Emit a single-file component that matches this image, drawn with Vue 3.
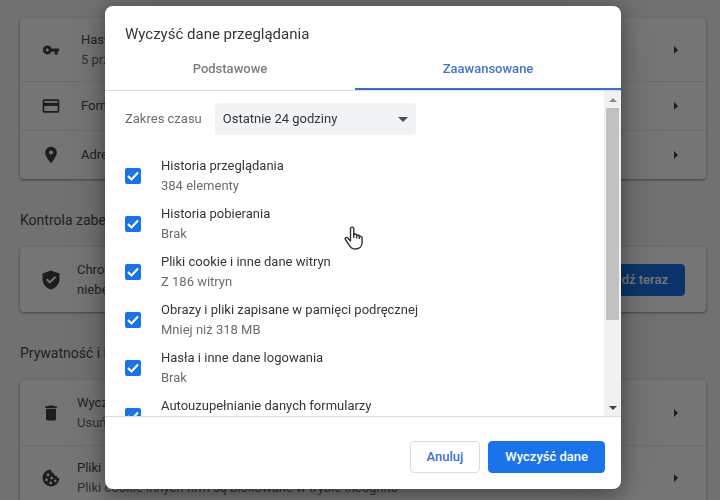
<script setup>
import { ref } from 'vue'

const range = ref('day')
const items = ref([
  { id: 'history', title: 'Historia przeglądania', note: '384 elementy', on: true },
  { id: 'downloads', title: 'Historia pobierania', note: 'Brak', on: true },
  { id: 'cookies', title: 'Pliki cookie i inne dane witryn', note: 'Z 186 witryn', on: true },
  { id: 'cache', title: 'Obrazy i pliki zapisane w pamięci podręcznej', note: 'Mniej niż 318 MB', on: true },
  { id: 'passwords', title: 'Hasła i inne dane logowania', note: 'Brak', on: true },
  { id: 'forms', title: 'Autouzupełnianie danych formularzy', note: '', on: true }
])
</script>

<template>
  <div class="screen">
    <main class="page">
      <section class="card">
        <a href="#" class="row tall">
          <svg class="icon" viewBox="0 0 20 20"><path transform="translate(1.2 1.2) scale(.733)" d="M12.65 10C11.83 7.67 9.61 6 7 6c-3.31 0-6 2.69-6 6s2.69 6 6 6c2.61 0 4.83-1.67 5.65-4H17v4h4v-4h2v-4H12.65zM7 14c-1.1 0-2-.9-2-2s.9-2 2-2 2 .9 2 2-.9 2-2 2z" /></svg>
          <span class="label wide">Hasła<small>5 przejętych</small></span>
          <svg class="chevron" viewBox="0 0 6 8"><path d="M1 0l4 4-4 4z" /></svg>
        </a>
        <a href="#" class="row">
          <svg class="icon" viewBox="0 0 24 24"><path d="M20 4H4c-1.110 0-2 .89-2 2v12c0 1.110.89 2 2 2h16c1.110 0 2-.89 2-2V6c0-1.110-.89-2-2-2zm0 14H4v-6h16v6zm0-10H4V6h16v2z" /></svg>
          <span class="label wide">Formy płatności</span>
          <svg class="chevron" viewBox="0 0 6 8"><path d="M1 0l4 4-4 4z" /></svg>
        </a>
        <a href="#" class="row">
          <svg class="icon" viewBox="0 0 24 24"><path d="M12 2C8.130 2 5 5.130 5 9c0 5.250 7 13 7 13s7-7.750 7-13c0-3.870-3.130-7-7-7zm0 9.500a2.500 2.500 0 1 1 0-5 2.500 2.500 0 0 1 0 5z" /></svg>
          <span class="label wide">Adresy</span>
          <svg class="chevron" viewBox="0 0 6 8"><path d="M1 0l4 4-4 4z" /></svg>
        </a>
      </section>

      <h2>Kontrola zabezpieczeń</h2>
      <section class="card">
        <div class="row double">
          <svg class="icon" viewBox="0 0 20 20"><path fill-rule="evenodd" d="M10 .5L1.500 3.500v5.500c0 5 3.400 9 8.500 10.500 5.100-1.500 8.500-5.500 8.500-10.500V3.500zM8.800 13.800L5 10l1.400-1.400 2.400 2.400 5-5L15.200 7.400z" /></svg>
          <span class="label">Chrome<span>niebezpieczne</span></span>
          <button type="button" class="primary check-now">Sprawdź teraz</button>
        </div>
      </section>

      <h2>Prywatność i bezpieczeństwo</h2>
      <section class="card">
        <a href="#" class="row double">
          <svg class="icon" viewBox="0 0 24 24"><path d="M6 19c0 1.100.9 2 2 2h8c1.100 0 2-.9 2-2V7H6v12zM19 4h-3.500l-1-1h-5l-1 1H5v2h14V4z" /></svg>
          <span class="label">Wyczyść<small>Usuń</small></span>
          <svg class="chevron" viewBox="0 0 6 8"><path d="M1 0l4 4-4 4z" /></svg>
        </a>
        <a href="#" class="row double">
          <svg class="icon" viewBox="0 0 20 20"><path fill-rule="evenodd" d="M10 1.500a8.500 8.500 0 1 0 8.500 8.500c-1.600.4-2.600-.5-2.700-2-1.900.1-3-1-2.700-2.700-1.900-.1-3-1.700-3.100-3.800zM7 5.300a1.500 1.500 0 1 1 0 3 1.500 1.500 0 0 1 0-3zM5.500 10.500a1.400 1.400 0 1 1 0 2.800 1.400 1.400 0 0 1 0-2.800zM10.700 8.700a1.400 1.400 0 1 1 0 2.800 1.400 1.400 0 0 1 0-2.800zM9.700 13.500a1.400 1.400 0 1 1 0 2.800 1.400 1.400 0 0 1 0-2.800zM14.200 11.500a1.300 1.300 0 1 1 0 2.600 1.300 1.300 0 0 1 0-2.600z" /></svg>
          <span class="label">Pliki<small>Pliki cookie innych firm są blokowane w trybie incognito</small></span>
          <svg class="chevron" viewBox="0 0 6 8"><path d="M1 0l4 4-4 4z" /></svg>
        </a>
      </section>
    </main>

    <div class="backdrop">
      <div class="dialog" role="dialog" aria-labelledby="dialog-title">
        <h1 id="dialog-title">Wyczyść dane przeglądania</h1>
        <div class="tabs" role="tablist">
          <button type="button" role="tab" aria-selected="false">Podstawowe</button>
          <button type="button" role="tab" aria-selected="true" class="active">Zaawansowane</button>
        </div>
        <div class="body">
          <div class="content">
            <div class="range">
              <label for="range">Zakres czasu</label>
              <span class="select">
                <select id="range" v-model="range">
                  <option value="day">Ostatnie 24 godziny</option>
                </select>
                <svg viewBox="0 0 10 5"><path d="M0 0h10L5 5z" /></svg>
              </span>
            </div>
            <label v-for="item in items" :key="item.id" class="item">
              <input v-model="item.on" type="checkbox">
              <svg class="tick" viewBox="0 0 16 16"><path d="M3 8l3.500 3.500L13 4.500" /></svg>
              <span class="text">{{ item.title }}<small>{{ item.note }}</small></span>
            </label>
          </div>
          <div class="scrollbar">
            <svg class="up" viewBox="0 0 8 4"><path d="M4 0l4 4H0z" /></svg>
            <div class="track"><div class="thumb"></div></div>
            <svg class="down" viewBox="0 0 8 4"><path d="M0 0h8L4 4z" /></svg>
          </div>
        </div>
        <div class="footer">
          <button type="button" class="secondary">Anuluj</button>
          <button type="button" class="primary">Wyczyść dane</button>
        </div>
      </div>
    </div>

    <svg class="pointer" viewBox="0 0 20 24"><path d="M6.500 15V2.800c0-2.300 3.300-2.300 3.300 0V9c.2-1.400 2.900-1.300 2.900.3v.4c.3-1.200 2.700-1 2.700.5v.6c.5-.9 2.700-.6 2.700.8v5c0 3.800-2.800 6.400-6.600 6.400-3.500 0-5-1.600-6.600-4.200l-3.400-5.300c-1-1.600.9-2.900 2.200-1.500z" /><path d="M9.800 7v5M12.700 9v3.500M15.400 10v3" /></svg>
  </div>
</template>

<style>
body {
  margin: 0;
  overflow: hidden;
}
</style>

<style scoped>
* {
  box-sizing: border-box;
}

.screen {
  position: relative;
  height: 100vh;
  overflow: hidden;
  background: #f4f7f5;
  color: #34373a;
  font: 13px/20px Roboto, "Liberation Sans", sans-serif;
}

button,
select {
  font: inherit;
}

small {
  display: block;
  color: #6a6d71;
  font-size: 13px;
}

.page {
  padding: 18px 14px 0 20px;
  color: #46494c;
}

.card {
  border-radius: 4px;
  background: #fff;
  box-shadow: 0 1px 2px rgba(60, 64, 67, .4), 0 1px 3px 1px rgba(60, 64, 67, .15);
}

.row {
  display: flex;
  align-items: center;
  height: 49px;
  padding: 0 27px 0 21px;
  color: inherit;
  text-decoration: none;
}

.row + .row {
  border-top: 1px solid #ececec;
}

.row.tall {
  height: 63px;
}

.row.double {
  height: 65px;
}

.icon {
  width: 20px;
  height: 20px;
  fill: #3c4043;
}

.label {
  flex: 1;
  padding-left: 16px;
}

.label.wide {
  padding-left: 20px;
}

.label span {
  display: block;
}

.chevron {
  width: 6px;
  height: 8px;
  fill: #3c4043;
}

h2 {
  margin: 31px 0 17px;
  font-size: 14px;
  font-weight: 400;
  line-height: 20px;
}

.primary,
.secondary {
  height: 32px;
  padding: 0 16px;
  border: 1px solid #1a73e8;
  border-radius: 4px;
  background: #1a73e8;
  color: #fff;
  font-weight: 500;
}

.secondary {
  border-color: #dadce0;
  background: #fff;
  color: #3b6fd0;
}

.check-now {
  margin-right: -6px;
}

.backdrop {
  position: fixed;
  inset: 0;
  display: flex;
  justify-content: center;
  padding: 6px 0 11px 6px;
  background: rgba(0, 0, 0, .54);
}

.dialog {
  display: flex;
  flex-direction: column;
  width: 516px;
  max-width: 100%;
  overflow: hidden;
  border-radius: 8px;
  background: #fff;
  box-shadow: 0 4px 20px rgba(0, 0, 0, .4), 0 0 60px rgba(0, 0, 0, .15);
}

h1 {
  margin: 0;
  padding: 17px 20px 4px;
  font-size: 15px;
  font-weight: 400;
  line-height: 22px;
}

.tabs {
  display: flex;
  border-bottom: 1px solid #dadce0;
}

.tabs button {
  flex: auto;
  height: 41px;
  padding: 1px 0 0;
  border: 0;
  border-bottom: 2px solid transparent;
  background: none;
  color: #7a7d80;
  font-weight: 500;
}

.tabs .active {
  border-color: #3b6fc4;
  color: #4474ca;
}

.body {
  display: flex;
  flex: 1;
  min-height: 0;
  overflow: hidden;
}

.content {
  flex: 1;
  padding: 12px 20px 0;
}

.range {
  display: flex;
  align-items: center;
  gap: 13px;
  margin-bottom: 17px;
  color: #6a6d71;
}

.select {
  display: grid;
  align-items: center;
  width: 201px;
}

.select select,
.select svg {
  grid-area: 1 / 1;
}

.select select {
  height: 32px;
  padding: 0 8px;
  border: 0;
  border-radius: 4px;
  background: #f1f3f4;
  color: #34373a;
  appearance: none;
}

.select svg {
  justify-self: end;
  width: 10px;
  height: 5px;
  margin-right: 8px;
  fill: #4d5155;
  pointer-events: none;
}

.item {
  display: grid;
  grid-template-columns: 16px 1fr;
  align-items: center;
  column-gap: 20px;
  height: 48px;
}

.item input,
.tick {
  grid-area: 1 / 1;
  width: 16px;
  height: 16px;
  margin: 0;
}

.item input {
  border: 2px solid #5f6368;
  border-radius: 2px;
  appearance: none;
}

.item input:checked {
  border-color: #1a73e8;
  background: #1a73e8;
}

.tick {
  fill: none;
  stroke: #fff;
  stroke-width: 2;
  pointer-events: none;
}

.text {
  grid-area: 1 / 2;
}

.text small {
  min-height: 20px;
}

.scrollbar {
  display: flex;
  flex-direction: column;
  align-items: center;
  width: 17px;
  background: #f1f1f1;
}

.up,
.down {
  width: 8px;
  height: 4px;
  margin: 7px 0 6px;
  fill: #8b8b8b;
}

.down {
  fill: #404040;
}

.track {
  flex: 1;
  width: 13px;
}

.thumb {
  height: 73%;
  background: #c1c1c1;
}

.footer {
  display: flex;
  justify-content: flex-end;
  gap: 8px;
  padding: 24px 16px 16px;
  border-top: 1px solid #dadce0;
}

.pointer {
  position: absolute;
  top: 226px;
  left: 344px;
  width: 20px;
  height: 24px;
  fill: #fff;
  stroke: #333;
  stroke-width: 1.400;
  stroke-linejoin: round;
}
</style>
